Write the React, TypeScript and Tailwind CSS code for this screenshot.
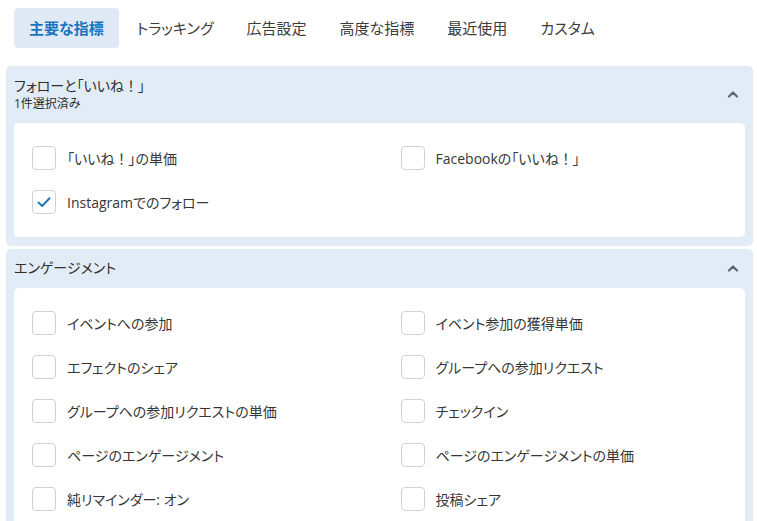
import React, { useState } from "react"

const tabs = ["主要な指標", "トラッキング", "広告設定", "高度な指標", "最近使用", "カスタム"]

type Section = {
  title: string
  subtitle?: string
  items: { label: string; checked?: boolean }[]
}

const sections: Section[] = [
  {
    title: "フォローと「いいね！」",
    subtitle: "1件選択済み",
    items: [
      { label: "「いいね！」の単価" },
      { label: "Facebookの「いいね！」" },
      { label: "Instagramでのフォロー", checked: true },
    ],
  },
  {
    title: "エンゲージメント",
    items: [
      { label: "イベントへの参加" },
      { label: "イベント参加の獲得単価" },
      { label: "エフェクトのシェア" },
      { label: "グループへの参加リクエスト" },
      { label: "グループへの参加リクエストの単価" },
      { label: "チェックイン" },
      { label: "ページのエンゲージメント" },
      { label: "ページのエンゲージメントの単価" },
      { label: "純リマインダー: オン" },
      { label: "投稿シェア" },
    ],
  },
]

// full-width "！" keeps its spacing, the rest uses proportional kana
function Label({ text }: { text: string }) {
  const parts = text.split("！")
  return (
    <>
      {parts.map((p, i) => (
        <React.Fragment key={i}>
          {p}
          {i < parts.length - 1 && <span className="[font-feature-settings:normal]">！</span>}
        </React.Fragment>
      ))}
    </>
  )
}

function ChevronUp() {
  return (
    <svg width="12" height="8" viewBox="0 0 12 8" className="text-[#5b6673]">
      <path d="M2 6.5 L6 2.5 L10 6.5" fill="none" stroke="currentColor" strokeWidth="2.2" strokeLinecap="round" strokeLinejoin="round" />
    </svg>
  )
}

function Checkbox({ checked, onClick }: { checked: boolean; onClick: () => void }) {
  return (
    <button
      onClick={onClick}
      className="flex h-6 w-6 shrink-0 items-center justify-center rounded-[4px] border border-[#ccd3db] bg-white"
    >
      {checked && (
        <svg width="16" height="16" viewBox="0 0 16 16">
          <path d="M2.5 8.5 L6.2 12 L13.5 4.2" fill="none" stroke="#1f78c1" strokeWidth="2" strokeLinecap="round" strokeLinejoin="round" />
        </svg>
      )}
    </button>
  )
}

function MetricSection({ section }: { section: Section }) {
  const [checked, setChecked] = useState<boolean[]>(section.items.map((i) => !!i.checked))
  return (
    <div className="rounded-[5px] bg-[#e1ecf6] px-2 pb-[9px]">
      <div className={"flex items-center justify-between " + (section.subtitle ? "pt-[10px] pb-[11px]" : "pt-[9px] pb-[10px]")}>
        <div className="flex flex-col">
          <span className="text-[14px] leading-[20px] text-[#2f2f2f]">
            <Label text={section.title} />
          </span>
          {section.subtitle && <span className="text-[12px] leading-[16px] text-[#2f2f2f]">{section.subtitle}</span>}
        </div>
        <div className="mr-[6px]">
          <ChevronUp />
        </div>
      </div>
      <div className="grid grid-cols-2 gap-x-[42px] gap-y-5 rounded-[5px] bg-white py-[23px] pl-[18px] pr-[18px]">
        {section.items.map((item, i) => (
          <div key={item.label} className="flex items-center gap-[11px]">
            <Checkbox
              checked={checked[i]}
              onClick={() => setChecked((prev) => prev.map((v, j) => (j === i ? !v : v)))}
            />
            <span className="text-[14px] text-[#363636]">
              <Label text={item.label} />
            </span>
          </div>
        ))}
      </div>
    </div>
  )
}

export default function App() {
  const [active, setActive] = useState(0)
  return (
    <div className="min-h-screen bg-white font-['Open_Sans','Noto_Sans_CJK_JP',sans-serif] [font-feature-settings:'palt']">
      <div className="flex gap-[3px] pt-2 pl-[14px]">
        {tabs.map((t, i) => (
          <button
            key={t}
            onClick={() => setActive(i)}
            className={
              "h-10 rounded-[4px] px-[15px] text-[15px] " +
              (active === i ? "bg-[#dfeaf6] font-bold text-[#1a74bf]" : "text-[#3c3c3c]")
            }
          >
            {t}
          </button>
        ))}
      </div>
      <div className="mt-[18px] flex flex-col gap-[3px] pl-[6px] pr-[4px]">
        {sections.map((s) => (
          <MetricSection key={s.title} section={s} />
        ))}
      </div>
    </div>
  )
}
